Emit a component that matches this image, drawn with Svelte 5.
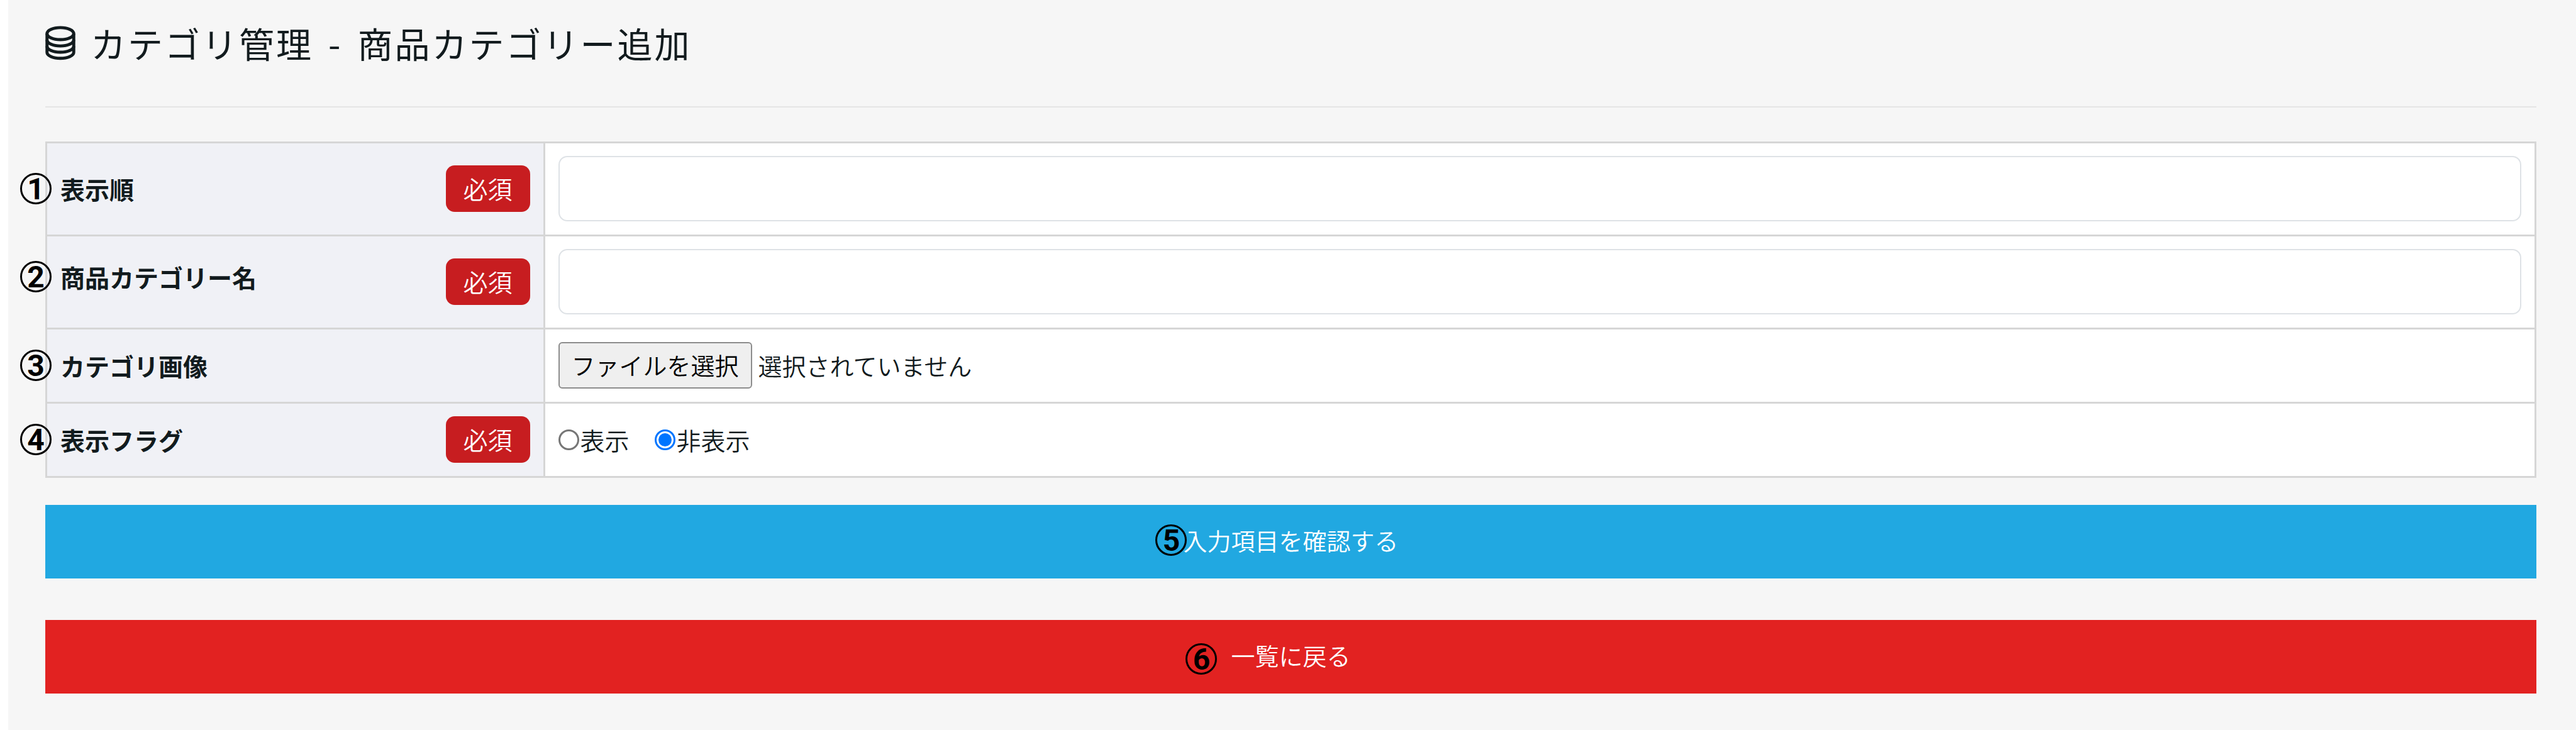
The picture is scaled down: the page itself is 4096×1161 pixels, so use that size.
<script>
	let order = ''
	let name = ''
	let flag = 'hide'
	let files
	let picker

	$: filename = files && files.length ? files[0].name : '選択されていません'
</script>

<main>
	<header>
		<svg viewBox='0 0 156 178' fill='none' stroke='currentColor' stroke-width='16' aria-hidden='true'>
			<ellipse cx='78' cy='40' rx='69' ry='31' />
			<path d='M9 40V137A69 31 0 0 0 147 137V40' />
			<path d='M9 73A69 31 0 0 0 147 73' />
			<path d='M9 105A69 31 0 0 0 147 105' />
		</svg>
		<h1>カテゴリ管理<span class='dash'>-</span>商品カテゴリー追加</h1>
	</header>

	<form on:submit|preventDefault>
		<table>
			<tbody>
				<tr>
					<th scope='row'>
						<div class='head'>
							<label for='order'><span class='mark'>1</span>表示順</label>
							<span class='badge'>必須</span>
						</div>
					</th>
					<td><input class='text' id='order' type='text' bind:value={order} /></td>
				</tr>
				<tr>
					<th scope='row'>
						<div class='head top'>
							<label for='name'><span class='mark'>2</span>商品カテゴリー名</label>
							<span class='badge'>必須</span>
						</div>
					</th>
					<td><input class='text' id='name' type='text' bind:value={name} /></td>
				</tr>
				<tr>
					<th scope='row'>
						<div class='head'>
							<label for='image'><span class='mark'>3</span>カテゴリ画像</label>
						</div>
					</th>
					<td>
						<div class='file'>
							<input id='image' type='file' tabindex='-1' bind:files bind:this={picker} />
							<button type='button' on:click={() => picker.click()}>ファイルを選択</button>
							<span>{filename}</span>
						</div>
					</td>
				</tr>
				<tr>
					<th scope='row'>
						<div class='head'>
							<span class='label' id='flag'><span class='mark'>4</span>表示フラグ</span>
							<span class='badge'>必須</span>
						</div>
					</th>
					<td>
						<div class='radios' role='radiogroup' aria-labelledby='flag'>
							<label><input type='radio' value='show' bind:group={flag} />表示</label>
							<label><input type='radio' value='hide' bind:group={flag} />非表示</label>
						</div>
					</td>
				</tr>
			</tbody>
		</table>

		<button class='bar confirm' type='submit'>
			<span class='caption'><span class='mark'>5</span>入力項目を確認する</span>
		</button>
		<a class='bar back' href='#list'>
			<span class='caption'><span class='mark'>6</span>一覧に戻る</span>
		</a>
	</form>
</main>

<style>
	:global(body) {
		margin: 0;
		background: #fff;
	}

	main {
		box-sizing: border-box;
		min-height: 100vh;
		margin-left: 13px;
		padding: 26px 63px 56px 59px;
		background: #f6f6f6;
		color: #121b1e;
		font-family: 'Noto Sans CJK JP', sans-serif;
		font-size: 38px;
		font-weight: 350;
		line-height: 58px;
	}

	header {
		display: flex;
		align-items: center;
		gap: 24px;
		padding-bottom: 59px;
		border-bottom: 2px solid #e5e5e5;
		margin-bottom: 54px;
	}

	header svg {
		width: 48px;
		height: 55px;
	}

	h1 {
		margin: 0;
		font-size: 56px;
		font-weight: 400;
		line-height: 84px;
		letter-spacing: 3px;
	}

	.dash {
		margin: 0 24px;
	}

	table {
		width: 100%;
		table-layout: fixed;
		border-collapse: collapse;
		margin-bottom: 43px;
		background: #fff;
	}

	th, td {
		padding: 20px 21px 21px;
		border: 3px solid #d6d6d6;
		text-align: left;
		vertical-align: middle;
	}

	th {
		width: 20%;
		box-sizing: border-box;
		background: #f0f1f6;
		font-size: 39px;
		font-weight: 350;
	}

	.head {
		display: flex;
		align-items: center;
		justify-content: space-between;
	}

	.head.top {
		align-items: flex-start;
	}

	.head label, .label {
		position: relative;
		font-weight: 700;
	}

	.badge {
		padding: 7px 28px 9px;
		border-radius: 14px;
		background: #c71d20;
		color: #fff;
	}

	.mark {
		position: absolute;
		top: 50%;
		left: -64px;
		box-sizing: border-box;
		width: 50px;
		height: 50px;
		margin-top: -25px;
		border: 3px solid #000;
		border-radius: 50%;
		color: #000;
		font: 700 48px/46px Roboto, sans-serif;
		text-align: center;
	}

	.text {
		display: block;
		box-sizing: border-box;
		width: 100%;
		height: 104px;
		padding: 0 24px;
		border: 2px solid #dee2e6;
		border-radius: 14px;
		background: #fff;
		font: inherit;
	}

	.file {
		display: flex;
		align-items: center;
		gap: 10px;
	}

	.file input {
		position: absolute;
		width: 1px;
		height: 1px;
		opacity: 0;
	}

	.file button {
		padding: 5px 19px 7px;
		border: 2px solid #8c8c8c;
		border-radius: 6px;
		background: #efefef;
		color: #000;
		font: inherit;
	}

	.radios {
		display: flex;
		gap: 40px;
		font-size: 39px;
	}

	.radios label {
		display: flex;
		align-items: center;
		gap: 2px;
	}

	.radios input {
		appearance: none;
		box-sizing: border-box;
		width: 33px;
		height: 33px;
		margin: 0;
		border: 3px solid #767676;
		border-radius: 50%;
		background: #fff;
	}

	.radios input:checked {
		padding: 3px;
		border-color: #0075ff;
		background: #0075ff content-box;
	}

	.bar {
		display: block;
		box-sizing: border-box;
		width: 100%;
		padding: 27px 30px 32px;
		border: 0;
		color: #fff;
		font: inherit;
		line-height: 58px;
		text-align: center;
		text-decoration: none;
	}

	.confirm {
		margin-bottom: 66px;
		background: #21a8e1;
	}

	.back {
		background: #e22221;
	}

	.caption {
		position: relative;
		display: inline-block;
	}

	.confirm .mark {
		left: -44px;
	}

	.back .mark {
		left: -72px;
		margin-top: -19px;
	}
</style>
